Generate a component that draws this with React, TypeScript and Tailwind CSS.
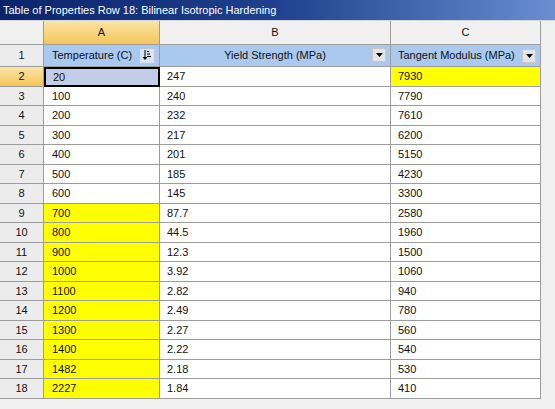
import type { ReactNode } from "react";

type Row = { n: number; temp: string; yieldS: string; tangent: string; hiA?: boolean; hiC?: boolean };

const ROWS: Row[] = [
  { n: 2, temp: "20", yieldS: "247", tangent: "7930", hiC: true },
  { n: 3, temp: "100", yieldS: "240", tangent: "7790" },
  { n: 4, temp: "200", yieldS: "232", tangent: "7610" },
  { n: 5, temp: "300", yieldS: "217", tangent: "6200" },
  { n: 6, temp: "400", yieldS: "201", tangent: "5150" },
  { n: 7, temp: "500", yieldS: "185", tangent: "4230" },
  { n: 8, temp: "600", yieldS: "145", tangent: "3300" },
  { n: 9, temp: "700", yieldS: "87.7", tangent: "2580", hiA: true },
  { n: 10, temp: "800", yieldS: "44.5", tangent: "1960", hiA: true },
  { n: 11, temp: "900", yieldS: "12.3", tangent: "1500", hiA: true },
  { n: 12, temp: "1000", yieldS: "3.92", tangent: "1060", hiA: true },
  { n: 13, temp: "1100", yieldS: "2.82", tangent: "940", hiA: true },
  { n: 14, temp: "1200", yieldS: "2.49", tangent: "780", hiA: true },
  { n: 15, temp: "1300", yieldS: "2.27", tangent: "560", hiA: true },
  { n: 16, temp: "1400", yieldS: "2.22", tangent: "540", hiA: true },
  { n: 17, temp: "1482", yieldS: "2.18", tangent: "530", hiA: true },
  { n: 18, temp: "2227", yieldS: "1.84", tangent: "410", hiA: true },
];

function DropButton() {
  return (
    <span className="flex h-[14px] w-[14px] items-center justify-center border border-[#c8c8c8] bg-[#e4e4e4]">
      <svg width="7" height="4" viewBox="0 0 7 4">
        <path d="M0 0h7L3.5 4z" fill="#000" />
      </svg>
    </span>
  );
}

function SortButton() {
  return (
    <span className="flex h-[16px] w-[16px] items-center justify-center border border-[#bcc8d8] bg-[#d8e4f2]">
      <svg width="10" height="11" viewBox="0 0 10 11">
        <path d="M3 0v7" stroke="#000" strokeWidth="1" />
        <path d="M0.5 7h5L3 10z" fill="#000" />
        <path d="M5 1.5h2M5 4h3M5 6.5h4" stroke="#000" strokeWidth="1" />
      </svg>
    </span>
  );
}

function Cell({ className, children }: { className: string; children?: ReactNode }) {
  return <div className={`flex items-center border-r border-b border-[#9c9c9c] ${className}`}>{children}</div>;
}

export default function App() {
  return (
    <div
      className="h-[409px] w-[555px] overflow-hidden bg-[#f0f0f0] text-[11px] text-[#111]"
      style={{ fontFamily: '"Liberation Sans", Arial, sans-serif' }}
    >
      <div className="flex h-[20px] items-center bg-gradient-to-r from-[#0a246a] via-[#1f418e] to-[#6a8ed0] pl-[3px] text-[11px] text-white">
        Table of Properties Row 18: Bilinear Isotropic Hardening
      </div>
      <div className="h-[1px] bg-[#d8d8d8]" />

      <div className="w-[541px]">
        {/* column letters */}
        <div className="flex h-[24px]">
          <Cell className="w-[44px] bg-[#f0f0f0]" />
          <Cell className="w-[116px] justify-center bg-gradient-to-b from-[#fbe4a4] to-[#f4c656]">A</Cell>
          <Cell className="w-[231px] justify-center bg-[#f0f0f0]">B</Cell>
          <Cell className="w-[150px] justify-center bg-[#f0f0f0]">C</Cell>
        </div>

        {/* row 1: names */}
        <div className="flex h-[22px]">
          <Cell className="w-[44px] justify-center bg-[#ececec]">1</Cell>
          <Cell className="w-[116px] justify-between bg-[#a9c9ef] pr-[4px] pl-[8px]">
            <span>Temperature (C)</span>
            <SortButton />
          </Cell>
          <Cell className="relative w-[231px] justify-center bg-[#a9c9ef]">
            <span>Yield Strength (MPa)</span>
            <span className="absolute top-[3px] right-[4px]">
              <DropButton />
            </span>
          </Cell>
          <Cell className="w-[150px] justify-between bg-[#a9c9ef] pr-[4px] pl-[7px]">
            <span>Tangent Modulus (MPa)</span>
            <DropButton />
          </Cell>
        </div>

        {ROWS.map((r) => (
          <div key={r.n} className={`flex ${r.n % 2 === 0 ? "h-[20px]" : "h-[19px]"}`}>
            <Cell
              className={`w-[44px] justify-center ${
                r.n === 2 ? "bg-gradient-to-b from-[#fbe4a4] to-[#f4c656]" : "bg-[#ececec]"
              }`}
            >
              {r.n}
            </Cell>
            {r.n === 2 ? (
              <div className="flex w-[116px] items-center border-2 border-black bg-[#c4cde8] pl-[7px]">{r.temp}</div>
            ) : (
              <Cell className={`w-[116px] pl-[8px] ${r.hiA ? "bg-[#ffff00]" : "bg-white"}`}>{r.temp}</Cell>
            )}
            <Cell className="w-[231px] bg-white pl-[7px]">{r.yieldS}</Cell>
            <Cell className={`w-[150px] pl-[7px] ${r.hiC ? "bg-[#ffff00]" : "bg-white"}`}>{r.tangent}</Cell>
          </div>
        ))}
      </div>
    </div>
  );
}
